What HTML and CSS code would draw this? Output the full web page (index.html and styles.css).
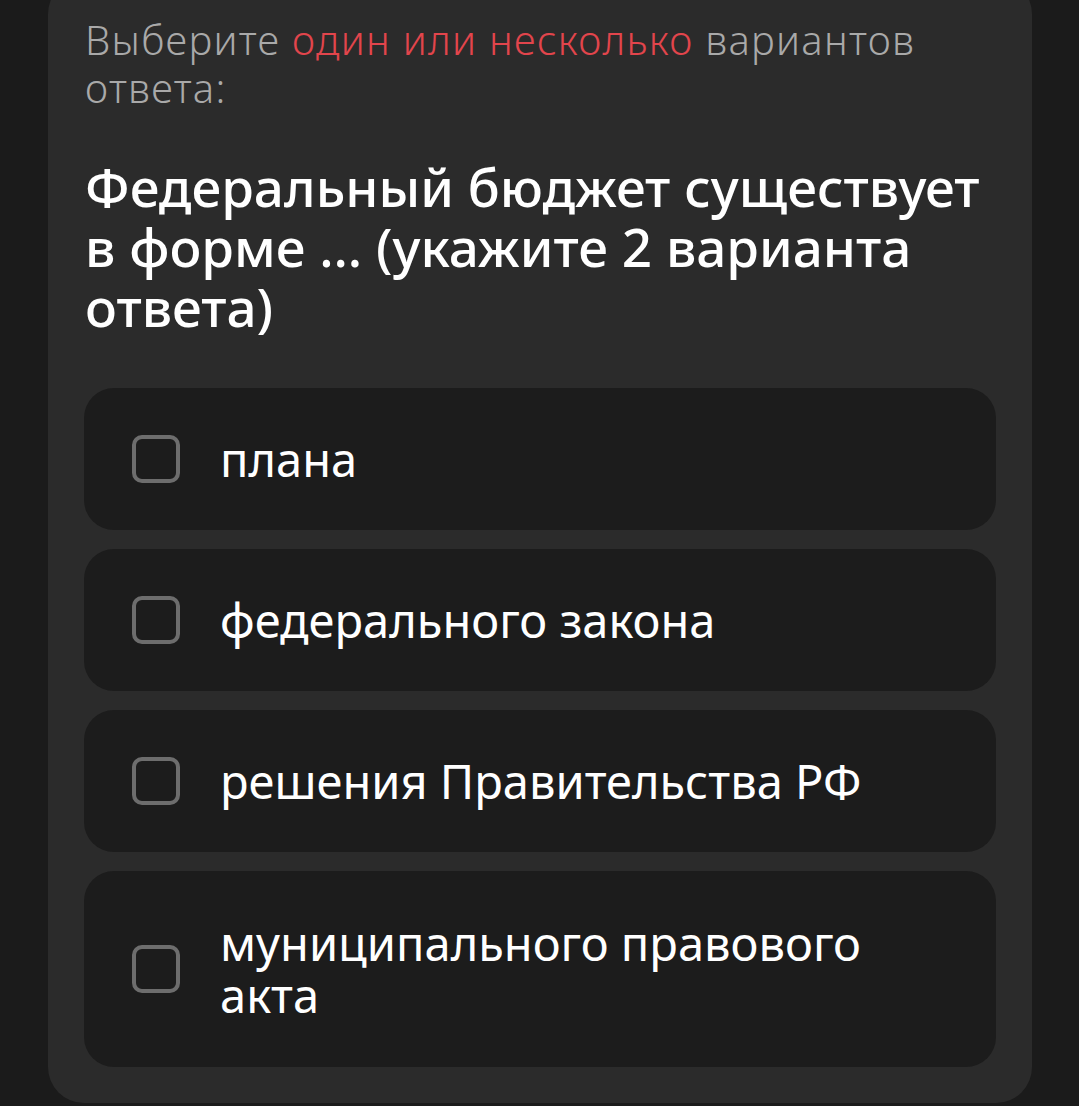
FILE: index.html
```html
<!DOCTYPE html>
<html lang="ru">
<head>
    <meta charset="UTF-8">
    <meta name="viewport" content="width=device-width, initial-scale=1.0">
    <title>Вопрос</title>
    <link rel="stylesheet" href="styles.css">
</head>
<body>
    <div class="card">
        <p class="hint">Выберите <span class="accent">один или несколько</span> вариантов ответа:</p>

        <h2 class="question">Федеральный бюджет существует в форме … (укажите 2 варианта ответа)</h2>

        <div class="options">
            <label class="option">
                <span class="box"></span>
                <span class="option-text">плана</span>
            </label>
            <label class="option">
                <span class="box"></span>
                <span class="option-text">федерального закона</span>
            </label>
            <label class="option">
                <span class="box"></span>
                <span class="option-text">решения Правительства РФ</span>
            </label>
            <label class="option">
                <span class="box"></span>
                <span class="option-text">муниципального правового акта</span>
            </label>
        </div>
    </div>
</body>
</html>
```

FILE: styles.css
```css
body {
    margin: 0;
    background-color: #1b1b1b;
    font-family: "Noto Sans", "Open Sans", sans-serif;
}
.card {
    width: 912px;
    margin: -22px 0 0 48px;
    padding: 38px 36px 36px 36px;
    background-color: #2b2b2b;
    border-radius: 36px;
}
.hint {
    margin: 0;
    padding-left: 1px;
    font-size: 40px;
    font-weight: 300;
    letter-spacing: 1.3px;
    line-height: 48px;
    color: #a9a9a9;
}
.accent {
    color: #e2454c;
}
.question {
    margin: 45px 0 51px 0;
    padding-left: 1px;
    font-size: 53px;
    font-weight: 500;
    line-height: 60px;
    color: #ffffff;
}
.options {
    display: flex;
    flex-direction: column;
    gap: 19px;
}
.option {
    display: flex;
    align-items: center;
    gap: 40px;
    min-height: 142px;
    padding: 0 48px;
    box-sizing: border-box;
    background-color: #1c1c1c;
    border-radius: 30px;
}
.option:last-child {
    min-height: 196px;
}
.box {
    flex: none;
    width: 40px;
    height: 40px;
    border: 4px solid #6d6d6d;
    border-radius: 10px;
}
.option-text {
    font-size: 47px;
    font-weight: 400;
    line-height: 52px;
    color: #ffffff;
    padding-right: 80px;
}
```
